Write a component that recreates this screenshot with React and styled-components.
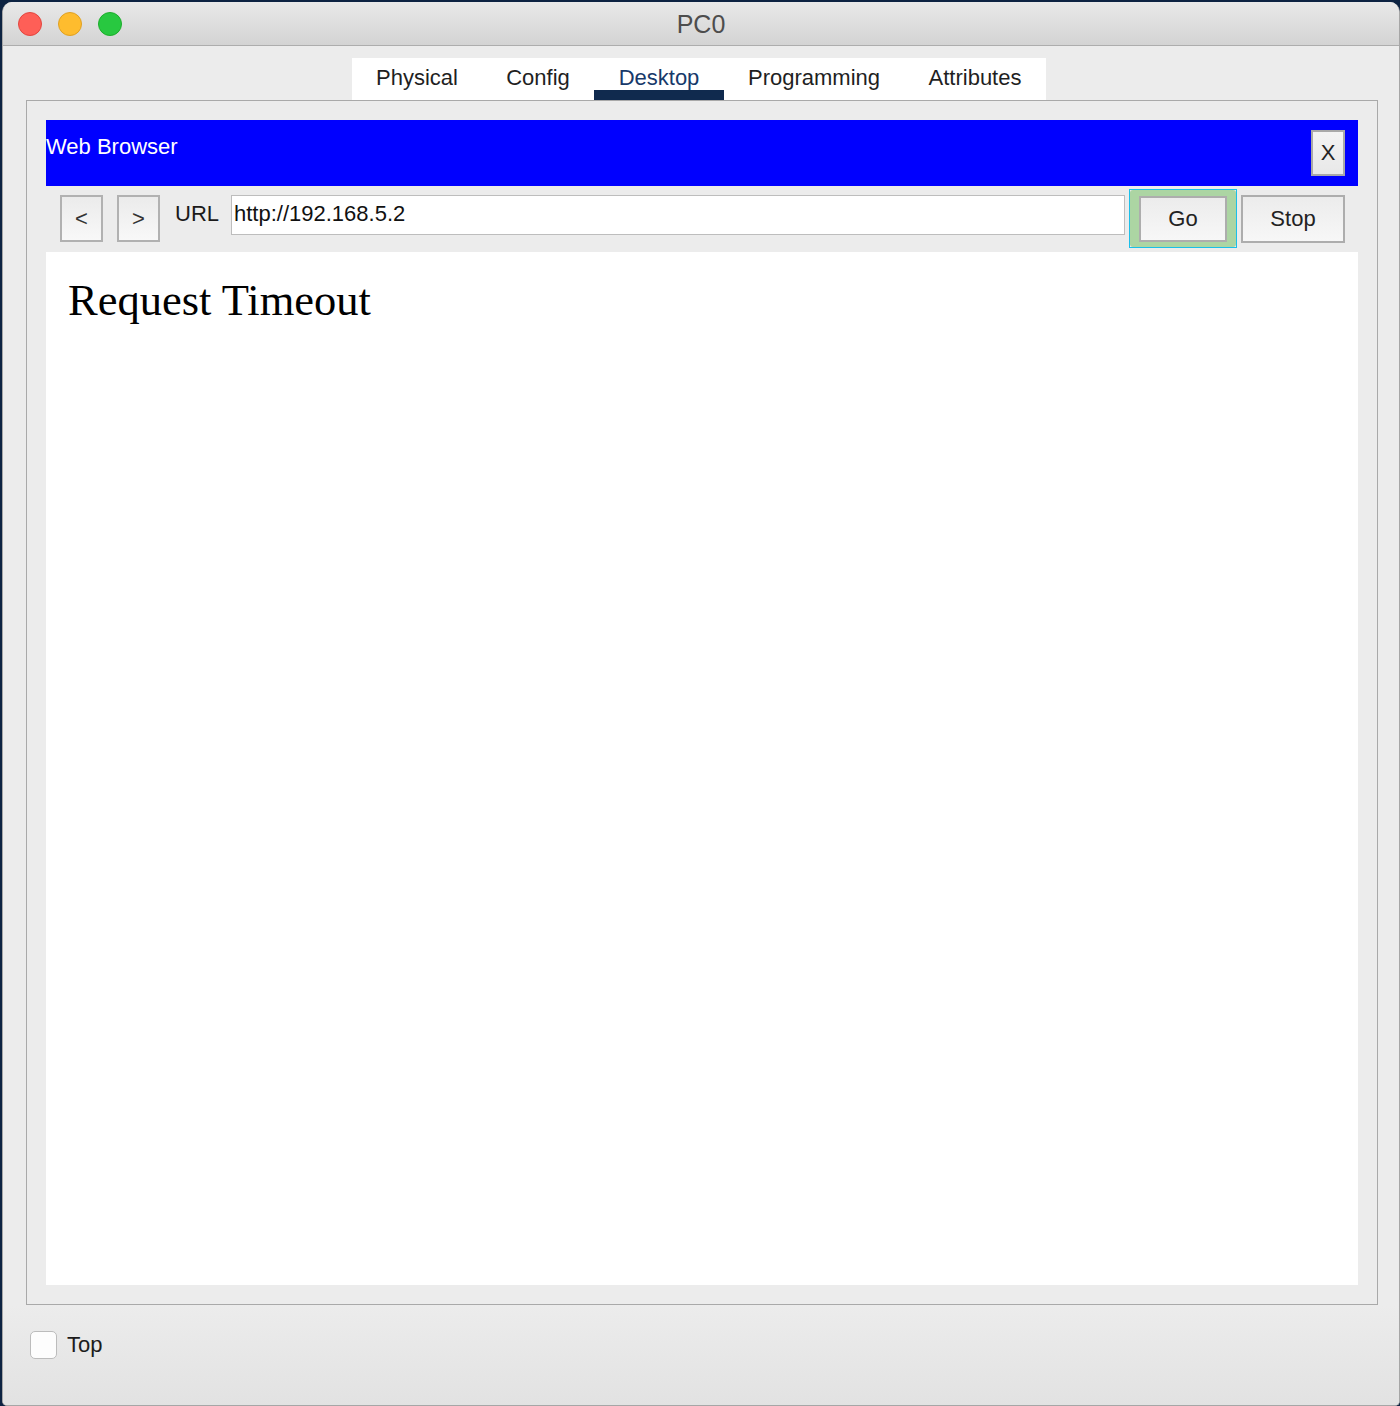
import React from 'react';
import styled, { createGlobalStyle } from 'styled-components';

const Global = createGlobalStyle`
  html, body { margin: 0; padding: 0; background: #0d2342; }
  body { font-family: "Liberation Sans", Arial, Helvetica, sans-serif; }
  * { box-sizing: border-box; }
`;

const Window = styled.div`
  margin: 2px 0 0 2px;
  width: 1398px;
  height: 1404px;
  display: flex;
  flex-direction: column;
  background: #ececec;
  border: 1px solid #a6a6a6;
  border-top: none;
  border-radius: 10px 10px 5px 5px;
  overflow: hidden;
`;

const TitleBar = styled.div`
  height: 44px;
  flex: none;
  display: grid;
  grid-template-columns: 1fr auto 1fr;
  align-items: center;
  padding-top: 1px;
  background: linear-gradient(#e9e9e9, #d3d3d3);
  border-bottom: 1px solid #adadad;
`;

const Lights = styled.div`
  display: flex;
  gap: 16px;
  padding-left: 15px;
`;

const Light = styled.span`
  width: 24px;
  height: 24px;
  border-radius: 50%;
  background: ${p => p.$fill};
  border: 1px solid ${p => p.$edge};
`;

const Title = styled.div`
  font-size: 25px;
  color: #4d4d4d;
  line-height: 1;
  padding-top: 1px;
`;

const Body = styled.div`
  flex: 1;
  min-height: 0;
  display: flex;
  flex-direction: column;
  padding: 12px 21px 0 23px;
`;

const TabBar = styled.div`
  align-self: center;
  margin-right: 6px;
  display: flex;
  height: 42px;
  background: #ffffff;
`;

const Tab = styled.div`
  width: ${p => p.$w}px;
  height: 42px;
  display: flex;
  align-items: center;
  justify-content: center;
  padding-bottom: 2px;
  font-size: 22px;
  color: ${p => (p.$active ? '#17396a' : '#1f1f1f')};
  box-shadow: ${p => (p.$active ? 'inset 0 -10px 0 #102a4e' : 'none')};
`;

const Panel = styled.div`
  flex: 1;
  min-height: 0;
  display: flex;
  flex-direction: column;
  border: 1px solid #a9a9a9;
  padding: 19px;
`;

const BrowserHeader = styled.div`
  height: 66px;
  flex: none;
  display: flex;
  justify-content: space-between;
  align-items: flex-start;
  background: #0000ff;
  padding-right: 13px;
`;

const HeaderTitle = styled.div`
  margin-top: 15px;
  color: #ffffff;
  font-size: 22px;
  line-height: 24px;
`;

const CloseButton = styled.div`
  margin-top: 10px;
  width: 34px;
  height: 46px;
  display: flex;
  align-items: center;
  justify-content: center;
  border: 2px solid #a9a9a9;
  background: linear-gradient(#f3f3f3, #e8e8e8);
  font-size: 22px;
  color: #222;
`;

const Toolbar = styled.div`
  height: 66px;
  flex: none;
  display: flex;
  align-items: flex-start;
  padding: 9px 13px 0 14px;
`;

const NavButton = styled.div`
  width: 43px;
  height: 47px;
  margin-left: ${p => p.$ml || 0}px;
  display: flex;
  align-items: center;
  justify-content: center;
  border: 2px solid #b1b1b1;
  background: linear-gradient(#ebebeb, #f8f8f8);
  font-size: 22px;
  color: #333;
`;

const UrlLabel = styled.div`
  margin-left: 15px;
  height: 40px;
  line-height: 38px;
  font-size: 22px;
  color: #1a1a1a;
`;

const UrlInput = styled.input`
  margin-left: 12px;
  flex: 1;
  min-width: 0;
  height: 40px;
  border: 1px solid #bdbdbd;
  border-radius: 0;
  padding: 0 2px 2px;
  background: #ffffff;
  font-family: "Liberation Sans", Arial, sans-serif;
  font-size: 22px;
  color: #111;
  outline: none;
`;

const FocusRing = styled.div`
  margin-left: 4px;
  margin-top: -6px;
  border: 1px solid #1bbfe9;
`;

const GreenRing = styled.div`
  background: #acd5a3;
  border-radius: 3px;
  padding: 6px 9px 5px 9px;
`;

const ToolButton = styled.div`
  width: ${p => p.$w}px;
  height: ${p => p.$h}px;
  margin-left: ${p => p.$ml || 0}px;
  display: flex;
  align-items: center;
  justify-content: center;
  border: 2px solid #adadad;
  background: linear-gradient(#ececec, #f7f7f7);
  font-size: 22px;
  color: #222;
`;

const Page = styled.div`
  flex: 1;
  min-height: 0;
  background: #ffffff;
  padding: 22px 22px;
`;

const Heading = styled.h1`
  margin: 0;
  font-family: "Liberation Serif", "Times New Roman", serif;
  font-size: 44.5px;
  font-weight: 400;
  line-height: normal;
  color: #000;
`;

const Footer = styled.div`
  height: 100px;
  flex: none;
  padding: 26px 0 0 27px;
  background: linear-gradient(#ececec, #e2e2e2);
`;

const CheckRow = styled.label`
  display: flex;
  align-items: center;
  gap: 10px;
`;

const CheckBox = styled.span`
  width: 27px;
  height: 28px;
  border: 1px solid #bcbcbc;
  border-radius: 5px;
  background: #fdfdfd;
`;

const CheckText = styled.span`
  font-size: 22px;
  color: #1c1c1c;
`;

const tabs = [
  { label: 'Physical', w: 130 },
  { label: 'Config', w: 112 },
  { label: 'Desktop', w: 130, active: true },
  { label: 'Programming', w: 180 },
  { label: 'Attributes', w: 142 },
];

export default function App() {
  return (
    <>
      <Global />
      <Window>
        <TitleBar>
          <Lights>
            <Light $fill="#fe5f57" $edge="#e2463f" />
            <Light $fill="#febc2e" $edge="#dfa023" />
            <Light $fill="#28c840" $edge="#1dad2b" />
          </Lights>
          <Title>PC0</Title>
          <div />
        </TitleBar>
        <Body>
          <TabBar>
            {tabs.map(t => (
              <Tab key={t.label} $w={t.w} $active={t.active}>
                {t.label}
              </Tab>
            ))}
          </TabBar>
          <Panel>
            <BrowserHeader>
              <HeaderTitle>Web Browser</HeaderTitle>
              <CloseButton>X</CloseButton>
            </BrowserHeader>
            <Toolbar>
              <NavButton>&lt;</NavButton>
              <NavButton $ml={14}>&gt;</NavButton>
              <UrlLabel>URL</UrlLabel>
              <UrlInput readOnly value="http://192.168.5.2" />
              <FocusRing>
                <GreenRing>
                  <ToolButton $w={88} $h={46}>Go</ToolButton>
                </GreenRing>
              </FocusRing>
              <ToolButton $w={104} $h={48} $ml={4}>Stop</ToolButton>
            </Toolbar>
            <Page>
              <Heading>Request Timeout</Heading>
            </Page>
          </Panel>
        </Body>
        <Footer>
          <CheckRow>
            <CheckBox />
            <CheckText>Top</CheckText>
          </CheckRow>
        </Footer>
      </Window>
    </>
  );
}
